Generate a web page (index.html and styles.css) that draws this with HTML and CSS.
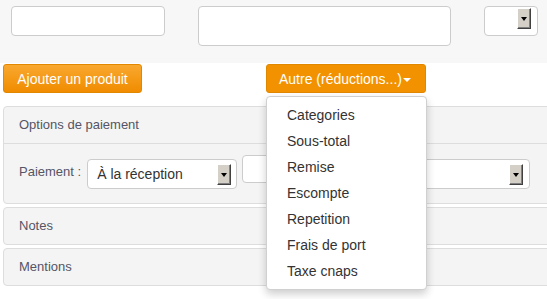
FILE: index.html
```html
<!DOCTYPE html>
<html lang="fr">
<head>
<meta charset="utf-8">
<title>Document</title>
<link rel="stylesheet" href="styles.css">
</head>
<body>
<div class="top">
  <div class="field f1"></div>
  <div class="field f2"></div>
  <div class="field f3"><span class="arrow"></span></div>
</div>
<div class="actions">
  <button class="btn btn-add">Ajouter un produit</button>
  <button class="btn btn-other">Autre (réductions...)<span class="caret"></span></button>
</div>
<div class="panel first">
  <div class="panel-head">Options de paiement</div>
  <div class="panel-body">
    <span class="label">Paiement :</span>
    <div class="field sel-pay"><span class="value">À la réception</span><span class="arrow"></span></div>
    <div class="field small-input"></div>
    <div class="field sel-right"><span class="arrow"></span></div>
  </div>
</div>
<div class="panel">
  <div class="panel-head only">Notes</div>
</div>
<div class="panel">
  <div class="panel-head only">Mentions</div>
</div>
<ul class="menu">
  <li>Categories</li>
  <li>Sous-total</li>
  <li>Remise</li>
  <li>Escompte</li>
  <li>Repetition</li>
  <li>Frais de port</li>
  <li>Taxe cnaps</li>
</ul>
</body>
</html>
```
FILE: styles.css
```css
html, body {
  margin: 0;
  padding: 0;
  background: #ffffff;
  font-family: "Liberation Sans", Arial, sans-serif;
  overflow: hidden;
}
body {
  position: relative;
  width: 547px;
  height: 299px;
}
.top {
  background: #f7f7f7;
  height: 63px;
  display: flex;
  align-items: flex-start;
  padding-top: 6px;
  box-sizing: border-box;
}
.field {
  background: #fff;
  border: 1px solid #cccccc;
  border-radius: 4px;
  box-sizing: border-box;
  position: relative;
}
.f1 { margin-left: 11px; width: 154px; height: 30px; }
.f2 { margin-left: 33px; width: 253px; height: 40px; }
.f3 { margin-left: 33px; width: 54px; height: 30px; }
.arrow {
  position: absolute;
  width: 14px;
  height: 21px;
  box-sizing: border-box;
  background: #d4d0c8;
  border-top: 1px solid #ffffff;
  border-left: 1px solid #ffffff;
  border-right: 1px solid #404040;
  border-bottom: 1px solid #404040;
  box-shadow: inset -1px -1px 0 #808080;
}
.arrow::after {
  content: "";
  position: absolute;
  left: 3px;
  top: 8px;
  border-left: 3px solid transparent;
  border-right: 3px solid transparent;
  border-top: 4px solid #000;
}
.f3 .arrow { right: 6px; top: 1px; }
.actions {
  display: flex;
  padding: 1px 0 0 3px;
}
.btn {
  height: 29px;
  border: 1px solid #e28700;
  border-radius: 3px;
  color: #fff;
  font-family: "Liberation Sans", Arial, sans-serif;
  font-size: 14px;
  padding: 0;
  margin: 0;
  box-sizing: border-box;
}
.btn-add {
  width: 139px;
  background: linear-gradient(#f9a82f, #f08c00);
}
.btn-other {
  width: 160px;
  margin-left: 124px;
  background: #f39200;
  text-align: left;
  padding-left: 12px;
}
.caret {
  display: inline-block;
  margin-left: 1px;
  vertical-align: middle;
  border-left: 4px solid transparent;
  border-right: 4px solid transparent;
  border-top: 4px solid #fff;
}
.panel {
  margin-left: 3px;
  width: 570px;
  background: #f4f4f4;
  border: 1px solid #dddddd;
  border-radius: 4px;
  margin-top: 3px;
  color: #555566;
  font-size: 13px;
}
.panel.first { margin-top: 13px; }
.panel-head {
  height: 36px;
  line-height: 36px;
  padding-left: 15px;
  border-bottom: 1px solid #dddddd;
}
.panel-head.only { border-bottom: none; }
.panel-body {
  height: 59px;
  display: flex;
  align-items: flex-start;
  padding: 11px 0 0 15px;
  box-sizing: border-box;
}
.label {
  margin-top: 9px;
  margin-right: 6px;
  font-size: 13px;
}
.sel-pay {
  width: 150px;
  height: 30px;
  margin-top: 4px;
  color: #333;
  font-size: 14px;
}
.sel-pay .value {
  position: absolute;
  left: 9px;
  top: 6px;
}
.sel-pay .arrow { right: 5px; top: 4px; }
.small-input {
  width: 60px;
  height: 28px;
  margin-left: 5px;
}
.sel-right {
  width: 220px;
  height: 30px;
  margin-left: 8px;
  margin-top: 4px;
}
.sel-right .arrow { right: 6px; top: 4px; }
.menu {
  position: absolute;
  left: 266px;
  top: 96px;
  width: 161px;
  margin: 0;
  padding: 5px 0;
  list-style: none;
  background: #fff;
  border: 1px solid #d0d0d0;
  border-radius: 4px;
  box-shadow: 0 4px 9px rgba(0, 0, 0, 0.2);
  box-sizing: border-box;
}
.menu li {
  height: 26px;
  line-height: 26px;
  padding-left: 20px;
  font-size: 14px;
  color: #333;
}
```
